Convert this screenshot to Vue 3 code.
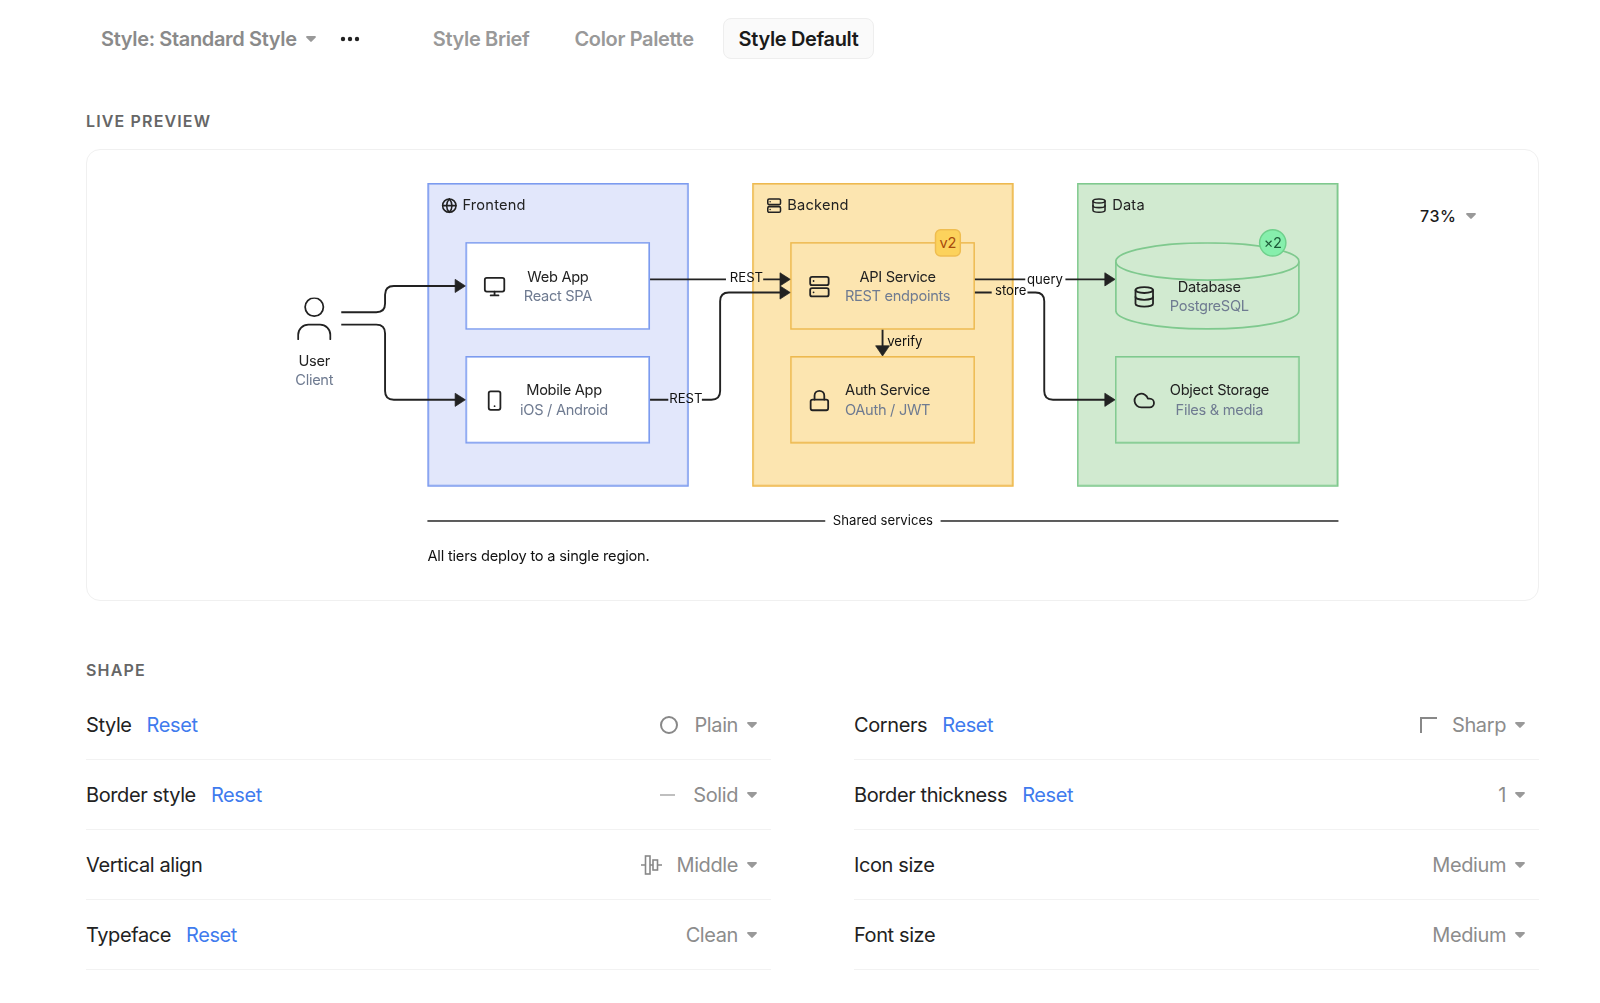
<script setup>
// lucide-like icon bodies, used through v-html on the svg
const icons = {
  globe: '<circle cx="12" cy="12" r="10"/><path d="M12 2a14.5 14.5 0 0 0 0 20 14.5 14.5 0 0 0 0-20"/><path d="M2 12h20"/>',
  server: '<rect x="2.5" y="2" width="19" height="8.5" rx="2"/><rect x="2.5" y="13.5" width="19" height="8.5" rx="2"/><path d="M6 6.2h.01M6 17.8h.01"/>',
  database: '<ellipse cx="12" cy="5" rx="9" ry="3"/><path d="M3 5v14a9 3 0 0 0 18 0V5"/><path d="M3 12a9 3 0 0 0 18 0"/>',
  monitor: '<rect x="2" y="3" width="20" height="14" rx="2"/><path d="M8 21h8M12 17v4"/>',
  phone: '<rect x="6" y="2.5" width="12" height="19" rx="2"/><path d="M12 17.8h.01"/>',
  lock: '<rect x="3" y="11" width="18" height="11" rx="2"/><path d="M7 11V7a5 5 0 0 1 10 0v4"/>',
  cloud: '<path d="M17.5 19H9a7 7 0 1 1 6.71-9h1.79a4.5 4.5 0 1 1 0 9Z"/>',
}

const groups = [
  {
    name: 'Frontend', tier: 'frontend', x: 180, icon: 'globe',
    nodes: [
      { title: 'Web App', sub: 'React SPA', icon: 'monitor', y: 81, shift: 5 },
      { title: 'Mobile App', sub: 'iOS / Android', icon: 'phone', y: 237, shift: 0 },
    ],
  },
  {
    name: 'Backend', tier: 'backend', x: 625, icon: 'server',
    nodes: [
      { title: 'API Service', sub: 'REST endpoints', icon: 'server', y: 81, shift: 0, badge: 'v2' },
      { title: 'Auth Service', sub: 'OAuth / JWT', icon: 'lock', y: 237, shift: 0 },
    ],
  },
  {
    name: 'Data', tier: 'data', x: 1070, icon: 'database',
    nodes: [
      { title: 'Database', sub: 'PostgreSQL', icon: 'database', y: 81, shift: 0, badge: '×2', cylinder: true },
      { title: 'Object Storage', sub: 'Files & media', icon: 'cloud', y: 237, shift: 0 },
    ],
  },
]

const edges = [
  'M62 177H110Q122 177 122 165V153Q122 141 134 141H220',
  'M62 194H110Q122 194 122 206V285Q122 297 134 297H220',
  'M485 132H589M640 132H665',
  'M485 297H510M556 297H569Q581 297 581 285V162Q581 150 593 150H665',
  'M930 132H999M1054 132H1110',
  'M930 150H953M1002 150H1013Q1025 150 1025 162V285Q1025 297 1037 297H1110',
  'M803.5 201V225',
]

const arrows = [
  '218,132 232,141 218,150',
  '218,288 232,297 218,306',
  '663,123 677,132 663,141',
  '663,141 677,150 663,159',
  '1108,123 1122,132 1108,141',
  '1108,288 1122,297 1108,306',
  '794,223 803.5,237 813,223',
]

const edgeLabels = [
  { text: 'REST', x: 617, y: 130 },
  { text: 'REST', x: 534, y: 295 },
  { text: 'query', x: 1026, y: 132 },
  { text: 'store', x: 979, y: 148 },
  { text: 'verify', x: 834, y: 217 },
]

const leftRows = [
  { label: 'Style', reset: true, value: 'Plain', icon: 'circle' },
  { label: 'Border style', reset: true, value: 'Solid', icon: 'dash' },
  { label: 'Vertical align', reset: false, value: 'Middle', icon: 'align' },
  { label: 'Typeface', reset: true, value: 'Clean' },
]

const rightRows = [
  { label: 'Corners', reset: true, value: 'Sharp', icon: 'corner' },
  { label: 'Border thickness', reset: true, value: '1' },
  { label: 'Icon size', reset: false, value: 'Medium' },
  { label: 'Font size', reset: false, value: 'Medium' },
]

const columns = [leftRows, rightRows]
</script>

<template>
  <div class="page">
    <div class="topbar">
      <div class="style-select">
        <span>Style: Standard Style</span>
        <svg class="caret" width="10" height="6" viewBox="0 0 10 6"><path d="M1 0h8a1 1 0 0 1 .7 1.6L5.7 5.6a1 1 0 0 1-1.4 0L.3 1.6A1 1 0 0 1 1 0Z" /></svg>
      </div>
      <svg class="dots" width="20" height="6" viewBox="0 0 20 6"><circle cx="3" cy="3" r="2.2" /><circle cx="10" cy="3" r="2.2" /><circle cx="17" cy="3" r="2.2" /></svg>
      <div class="tabs">
        <span class="tab">Style Brief</span>
        <span class="tab">Color Palette</span>
        <span class="tab active">Style Default</span>
      </div>
    </div>

    <h2 class="section-title preview-title">LIVE PREVIEW</h2>
    <div class="card">
      <div class="zoom-select">
        <span>73%</span>
        <svg class="caret" width="10" height="6" viewBox="0 0 10 6"><path d="M1 0h8a1 1 0 0 1 .7 1.6L5.7 5.6a1 1 0 0 1-1.4 0L.3 1.6A1 1 0 0 1 1 0Z" /></svg>
      </div>

      <div class="stage">
        <div class="user">
          <svg width="50" height="70" viewBox="0 0 50 70" fill="none" stroke="#222" stroke-width="2.4">
            <circle cx="25" cy="13" r="12.5" />
            <path d="M3 57v-6a14 14 0 0 1 14-14h16a14 14 0 0 1 14 14v6" stroke-linecap="round" />
          </svg>
          <div class="user-title">User</div>
          <div class="sub">Client</div>
        </div>

        <div v-for="group in groups" :key="group.name" class="group" :class="group.tier" :style="{ left: group.x + 'px' }">
          <div class="group-label">
            <svg class="icon" width="22" height="22" viewBox="0 0 24 24" stroke-width="2.3" v-html="icons[group.icon]"></svg>
            <span>{{ group.name }}</span>
          </div>
          <div
            v-for="node in group.nodes"
            :key="node.title"
            class="node"
            :class="{ cylinder: node.cylinder }"
            :style="{ top: node.y - 2 + 'px' }"
          >
            <svg v-if="node.cylinder" class="cyl-shape" width="253" height="120" viewBox="0 0 253 120">
              <path d="M1 26.5A125.5 25.5 0 0 1 252 26.5V93.5A125.5 25.5 0 0 1 1 93.5Z" />
              <path d="M1 26.5A125.5 25.5 0 0 0 252 26.5" />
            </svg>
            <svg class="icon node-icon" width="32" height="32" viewBox="0 0 24 24" stroke-width="1.85" v-html="icons[node.icon]"></svg>
            <div class="node-text" :style="{ marginLeft: node.shift + 'px' }">
              <div class="title">{{ node.title }}</div>
              <div class="sub">{{ node.sub }}</div>
            </div>
            <span v-if="node.badge" class="badge">{{ node.badge }}</span>
          </div>
        </div>

        <svg class="edges" width="1428" height="420" viewBox="0 0 1428 420">
          <path v-for="d in edges" :key="d" :d="d" />
          <polygon v-for="p in arrows" :key="p" :points="p" />
        </svg>
        <span
          v-for="label in edgeLabels"
          :key="label.text + label.x"
          class="edge-label"
          :style="{ left: label.x + 'px', top: label.y + 'px' }"
        >{{ label.text }}</span>

        <div class="shared">
          <i></i>
          <span>Shared services</span>
          <i></i>
        </div>
        <p class="note">All tiers deploy to a single region.</p>
      </div>
    </div>

    <h2 class="section-title shape-title">SHAPE</h2>
    <div class="settings">
      <div v-for="(rows, i) in columns" :key="i" class="column">
        <div v-for="row in rows" :key="row.label" class="row">
          <span class="row-label">{{ row.label }}</span>
          <a v-if="row.reset" class="reset">Reset</a>
          <div class="value">
            <svg v-if="row.icon === 'circle'" class="value-icon" width="20" height="20" viewBox="0 0 20 20"><circle cx="10" cy="10" r="8" /></svg>
            <svg v-if="row.icon === 'dash'" class="value-icon dash" width="15" height="20" viewBox="0 0 15 20"><path d="M0 10h15" /></svg>
            <svg v-if="row.icon === 'align'" class="value-icon align" width="21" height="20" viewBox="0 0 21 20"><path d="M0 10h4M9 10h3M17 10h4" /><rect x="4.5" y="1" width="4.5" height="18" /><rect x="12" y="5" width="4.5" height="10" /></svg>
            <svg v-if="row.icon === 'corner'" class="value-icon" width="17" height="16" viewBox="0 0 17 16"><path d="M1 16V1h16" /></svg>
            <span>{{ row.value }}</span>
            <svg class="caret" width="10" height="6" viewBox="0 0 10 6"><path d="M1 0h8a1 1 0 0 1 .7 1.6L5.7 5.6a1 1 0 0 1-1.4 0L.3 1.6A1 1 0 0 1 1 0Z" /></svg>
          </div>
        </div>
      </div>
    </div>
  </div>
</template>

<style>
html, body {
  background: #fff;
}
</style>

<style scoped>
.page {
  padding: 0 61px 0 86px;
  height: 1003px;
  box-sizing: border-box;
  overflow: hidden;
  font-family: Inter, "Liberation Sans", sans-serif;
  color: #222;
}
.topbar {
  display: flex;
  align-items: center;
  height: 77px;
  padding-left: 15px;
  font-size: 20px;
  font-weight: 600;
  letter-spacing: -0.35px;
}
.style-select {
  display: flex;
  align-items: center;
  gap: 9px;
  color: #8a8a8a;
}
.caret {
  fill: #999;
  flex: none;
}
.dots {
  margin-left: 24px;
  fill: #222;
}
.tabs {
  display: flex;
  align-items: center;
  gap: 13px;
  margin-left: 57px;
}
.tab {
  padding: 0 15px;
  height: 41px;
  line-height: 40px;
  box-sizing: border-box;
  border: 1px solid transparent;
  border-radius: 8px;
  color: #999;
}
.tab.active {
  color: #1a1a1a;
  background: #fafafa;
  border-color: #eee;
}
.section-title {
  margin: 0;
  font-size: 16px;
  line-height: 20px;
  font-weight: 600;
  letter-spacing: 1.15px;
  color: #666;
}
.preview-title {
  margin-top: 34px;
  margin-bottom: 18px;
}
.card {
  position: relative;
  height: 452px;
  box-sizing: border-box;
  border: 1px solid #f0f0f0;
  border-radius: 14px;
  padding: 33px 0 0 209px;
}
.zoom-select {
  position: absolute;
  top: 56px;
  left: 1333px;
  display: flex;
  align-items: center;
  gap: 9px;
  font-size: 16px;
  font-weight: 500;
  letter-spacing: 0.6px;
  line-height: 20px;
  color: #1a1a1a;
}
.stage {
  position: relative;
  width: 1428px;
  height: 540px;
  transform: scale(0.73);
  transform-origin: 0 0;
  font-size: 20px;
  line-height: 27px;
  letter-spacing: -0.4px;
  color: #222;
}
.user {
  position: absolute;
  left: 0;
  top: 157px;
  width: 50px;
  text-align: center;
}
.user svg {
  display: block;
}
.user-title {
  margin-top: 3px;
}
.user .sub {
  white-space: nowrap;
  margin: 0 -20px;
}
.sub {
  color: #6f7b91;
}
.group {
  position: absolute;
  top: 0;
  width: 358px;
  height: 416px;
  box-sizing: border-box;
  border: 2px solid var(--edge);
  box-shadow: inset 0 0 0 0.5px var(--edge);
}
.frontend {
  --edge: #7c9bef;
  background: #e2e7fb;
}
.backend {
  --edge: #edb94f;
  background: #fce5b0;
}
.data {
  --edge: #7fc98e;
  background: #d1ead0;
}
.group-label {
  display: flex;
  align-items: center;
  gap: 7px;
  padding: 15px 0 0 17px;
  letter-spacing: 0.3px;
}
.icon {
  fill: none;
  stroke: #222;
  stroke-linecap: round;
  stroke-linejoin: round;
  flex: none;
}
.node {
  position: absolute;
  left: 50px;
  width: 253px;
  height: 120px;
  box-sizing: border-box;
  display: flex;
  align-items: center;
  padding-left: 22px;
  border: 2px solid var(--edge);
  box-shadow: inset 0 0 0 0.5px var(--edge);
}
.frontend .node {
  background: #fff;
}
.data .node.cylinder {
  border: none;
  box-shadow: none;
  padding: 28px 0 0 24px;
}
.cyl-shape {
  position: absolute;
  left: 0;
  top: 0;
  fill: none;
  stroke: var(--edge);
  stroke-width: 2.5;
}
.node-icon {
  position: relative;
  top: 1px;
  margin-right: 19px;
}
.node-text {
  position: relative;
  padding-top: 2px;
  text-align: center;
  white-space: nowrap;
}
.badge {
  position: absolute;
  top: -20px;
  right: 17px;
  height: 38px;
  min-width: 36px;
  box-sizing: border-box;
  display: flex;
  align-items: center;
  justify-content: center;
  border: 2px solid #efbd50;
  border-radius: 8px;
  background: #fcd25c;
  color: #a84a0c;
}
.cylinder .badge {
  top: -18px;
  right: 18px;
  width: 38px;
  border-radius: 50%;
  border-color: #6fd08c;
  background: #86efac;
  color: #1c5a38;
}
.edges {
  position: absolute;
  left: 0;
  top: 0;
  overflow: visible;
  fill: none;
}
.edges path {
  stroke: #222;
  stroke-width: 2.6;
}
.edges polygon {
  fill: #222;
  stroke: #222;
  stroke-width: 1;
  stroke-linejoin: round;
}
.edge-label {
  position: absolute;
  transform: translate(-50%, -50%);
  font-size: 18px;
  line-height: 22px;
  letter-spacing: 0;
  color: #111;
}
.shared {
  position: absolute;
  left: 180px;
  top: 450px;
  width: 1248px;
  display: flex;
  align-items: center;
  gap: 10px;
  font-size: 18px;
  line-height: 26px;
  letter-spacing: 0;
  color: #111;
}
.shared i {
  flex: 1;
  height: 2.6px;
  background: #222;
}
.note {
  position: absolute;
  left: 180px;
  top: 498px;
  margin: 0;
  font-size: 20px;
  line-height: 26px;
  letter-spacing: -0.25px;
  color: #111;
}
.shape-title {
  margin-top: 59px;
  line-height: 20px;
}
.settings {
  display: grid;
  grid-template-columns: 1fr 1fr;
  column-gap: 83px;
  margin-top: 10px;
}
.row {
  display: flex;
  align-items: center;
  height: 70px;
  box-sizing: border-box;
  padding-right: 14px;
  border-bottom: 1px solid #f2f2f2;
  font-size: 20px;
  letter-spacing: -0.4px;
}
.reset {
  margin-left: 15px;
  color: #3f7bee;
}
.value {
  margin-left: auto;
  display: flex;
  align-items: center;
  color: #8c8c8c;
}
.value .caret {
  margin-left: 9px;
}
.value-icon {
  margin-right: 15px;
  fill: none;
  stroke: #888;
  stroke-width: 2;
}
.value-icon.dash {
  stroke: #aaa;
  stroke-width: 1.5;
  margin-right: 18px;
}
.value-icon.align {
  stroke-width: 1.6;
  margin-right: 14px;
}
</style>
